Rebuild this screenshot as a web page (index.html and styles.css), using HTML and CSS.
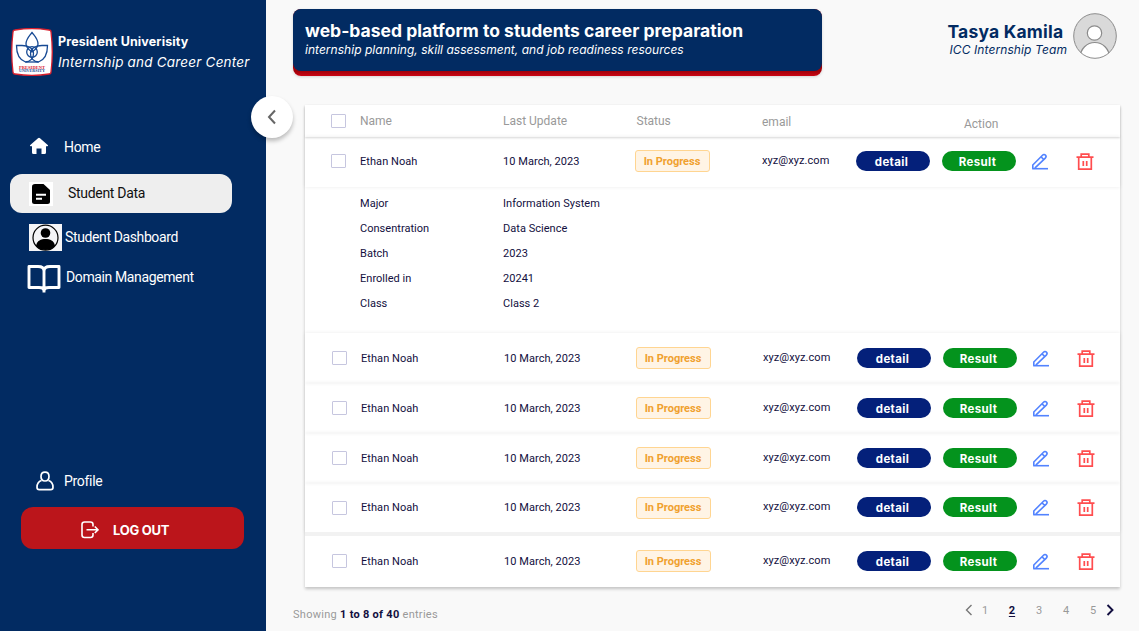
FILE: index.html
```
<!DOCTYPE html>
<html lang="en">
<head>
<meta charset="utf-8">
<title>Student Data</title>
<link rel="stylesheet" href="styles.css">
</head>
<body>
<svg class="defs" width="0" height="0">
  <symbol id="pencil" viewBox="0 0 18 18"><g fill="none" stroke="#5283ff" stroke-width="1.6"><path d="M1.8 15.8V12L11.5 2.3C12.4 1.4 13.6 1.3 14.4 2.1C15.2 2.900 15.2 4.2 14.3 5.1L3.8 15.2M10 3.8L12.8 6.6"/><path d="M1.2 15.7H17"/></g></symbol>
  <symbol id="trash" viewBox="0 0 18 18"><g fill="none" stroke="#ff4d4f" stroke-width="1.7"><path d="M.5 4.2H17.5M5.2 4V1.2H12.8V4M2.7 4.2V16.2H15.3V4.2M7.3 8V13M10.7 8V13"/></g></symbol>
</svg>
<div class="app">
  <aside class="sidebar">
    <div class="brand">
      <svg class="logo" width="42" height="48" viewBox="0 0 42 48">
        <path d="M4 2Q21 -1 38 2Q40 2 40 4Q42.500 24 40 44Q40 46 38 46Q21 49 4 46Q2 46 2 44Q-.5 24 2 4Q2 2 4 2Z" fill="#fff" stroke="#d9202e" stroke-width="1.300"/>
        <g fill="none" stroke="#174a94" stroke-width="1.300">
          <path d="M15 16C15 11 18 8.500 21 4.500C24 8.500 27 11 27 16C27 20 24 22 21 24C18 22 15 20 15 16Z"/>
          <path d="M5.500 17.500H11C17 17.500 22 20 22.500 25C23 30 19 34 14.500 34C9 32 5.500 26 5.500 17.500Z"/>
          <path d="M36.500 17.500H31C25 17.500 20 20 19.500 25C19 30 23 34 27.500 34C33 32 36.500 26 36.500 17.500Z"/>
          <circle cx="21" cy="24" r="5.300"/>
          <path d="M14.500 34H27.500"/>
        </g>
        <text x="21" y="40.500" class="logo-red" textLength="26" lengthAdjust="spacingAndGlyphs">PRESIDENT</text>
        <text x="21" y="44.300" class="logo-blue" textLength="26" lengthAdjust="spacingAndGlyphs">UNIVERSITY</text>
      </svg>
      <div class="brand-text">
        <div class="brand-name">President Univerisity</div>
        <div class="brand-sub">Internship and Career Center</div>
      </div>
    </div>
    <nav class="nav">
      <a class="nav-item home"><svg width="20" height="18" viewBox="0 0 20 18"><path d="M10 .8Q10.500 .8 11 1.200L19 8.300Q19.300 9 18.500 9.200H17V15.500Q17 17 15.500 17H12.500V11.500H7.500V17H4.500Q3 17 3 15.500V9.200H1.500Q.7 9 1 8.300L9 1.200Q9.500 .8 10 .8Z" fill="#fff"/></svg><span>Home</span></a>
      <a class="nav-item active"><svg width="24" height="24" viewBox="0 0 24 24"><path d="M0 0H24V24H0Z" fill="#fff"/><path d="M6 2H14.500L21 8V19.500Q21 22 18.500 22H5.500Q3 22 3 19.500V4.500Q3 2 6 2Z"/><path d="M7 12.700H17M7 16.700H13" stroke="#fff" stroke-width="2"/></svg><span>Student Data</span></a>
      <a class="nav-item dashboard"><svg width="33" height="27" viewBox="0 0 33 27"><path d="M0 0H33V27H0Z" fill="#f5f5f7"/><circle cx="16.500" cy="13.700" r="12.500" fill="none" stroke="#000" stroke-width="1.200"/><circle cx="16.500" cy="9" r="4.800"/><path d="M7 22C8 16.500 12 15 16.500 15S25 16.500 26 22Q22 26 16.500 26T7 22Z"/></svg><span>Student Dashboard</span></a>
      <a class="nav-item domain"><svg width="34" height="30" viewBox="0 0 34 30"><path d="M2 2.500H11Q17 2.500 17 7Q17 2.500 23 2.500H32V23.500H22Q17 23.500 17 27Q17 23.500 12 23.500H2ZM17 6V28.500" fill="none" stroke="#fff" stroke-width="2.900" stroke-linejoin="round"/></svg><span>Domain Management</span></a>
    </nav>
    <div class="account">
      <a class="profile"><svg width="18" height="20" viewBox="0 0 18 20"><g fill="none" stroke="#fff" stroke-width="1.700"><path d="M9 1.200C11.500 1.200 13 3 13 5.500C13 8 11.500 10 9 10S5 8 5 5.500C5 3 6.500 1.200 9 1.200Z"/><path d="M5.500 9.500C2.500 10.500 1 13 1 16.200Q1 18.600 3.300 18.600H14.700Q17 18.600 17 16.200C17 13 15.500 10.500 12.500 9.500"/></g></svg><span>Profile</span></a>
      <a class="logout"><svg width="18" height="18" viewBox="0 0 18 18"><path d="M12 5.500V3.500Q12 1 9.500 1H3.500Q1 1 1 3.500V14Q1 16.500 3.500 16.500H9.500Q12 16.500 12 14V12M5.500 8.800H17M13.800 5.500L17 8.800L13.800 12" fill="none" stroke="#fff" stroke-width="1.600"/></svg><span>LOG OUT</span></a>
    </div>
    <button class="collapse"><svg width="10" height="16" viewBox="0 0 10 16"><path d="M8 1.500L2 8L8 14.500" fill="none" stroke="#666" stroke-width="2"/></svg></button>
  </aside>
  <main class="main">
    <header class="top">
      <div class="banner"><div class="banner-in">
        <div class="banner-title">web-based platform to students career preparation</div>
        <div class="banner-sub">internship planning, skill assessment, and job readiness resources</div>
      </div></div>
      <div class="user">
        <div class="user-text"><div class="user-name">Tasya Kamila</div><div class="user-role">ICC Internship Team</div></div>
        <svg width="44" height="46" viewBox="0 0 44 46"><clipPath id="av"><ellipse cx="22" cy="23" rx="21.500" ry="22.500"/></clipPath><ellipse cx="22" cy="23" rx="21.300" ry="22.300" fill="#d9d9d9"/><g clip-path="url(#av)" fill="#fff" stroke="#8c8c8c" stroke-width="1.200"><circle cx="21.500" cy="20" r="7.200"/><ellipse cx="21.800" cy="44" rx="14.500" ry="14.500"/></g><ellipse cx="22" cy="23" rx="21.300" ry="22.300" fill="none" stroke="#8c8c8c"/></svg>
      </div>
    </header>
    <section class="table">
      <div class="grid head"><i class="check"></i><span>Name</span><span>Last Update</span><span class="h-status">Status</span><span class="h-email">email</span><span class="h-action">Action</span></div>
      <div class="grid row first"><i class="check"></i><span>Ethan Noah</span><span>10 March, 2023</span><b class="badge">In Progress</b><span class="email">xyz@xyz.com</span><b class="pill">detail</b><b class="pill green">Result</b><svg><use href="#pencil"/></svg><svg><use href="#trash"/></svg></div>
      <dl class="details">
        <dt>Major</dt><dd>Information System</dd>
        <dt>Consentration</dt><dd>Data Science</dd>
        <dt>Batch</dt><dd>2023</dd>
        <dt>Enrolled in</dt><dd>20241</dd>
        <dt>Class</dt><dd>Class 2</dd>
      </dl>
      <div class="grid row"><i class="check"></i><span>Ethan Noah</span><span>10 March, 2023</span><b class="badge">In Progress</b><span class="email">xyz@xyz.com</span><b class="pill">detail</b><b class="pill green">Result</b><svg><use href="#pencil"/></svg><svg><use href="#trash"/></svg></div>
      <div class="grid row"><i class="check"></i><span>Ethan Noah</span><span>10 March, 2023</span><b class="badge">In Progress</b><span class="email">xyz@xyz.com</span><b class="pill">detail</b><b class="pill green">Result</b><svg><use href="#pencil"/></svg><svg><use href="#trash"/></svg></div>
      <div class="grid row"><i class="check"></i><span>Ethan Noah</span><span>10 March, 2023</span><b class="badge">In Progress</b><span class="email">xyz@xyz.com</span><b class="pill">detail</b><b class="pill green">Result</b><svg><use href="#pencil"/></svg><svg><use href="#trash"/></svg></div>
      <div class="grid row short"><i class="check"></i><span>Ethan Noah</span><span>10 March, 2023</span><b class="badge">In Progress</b><span class="email">xyz@xyz.com</span><b class="pill">detail</b><b class="pill green">Result</b><svg><use href="#pencil"/></svg><svg><use href="#trash"/></svg></div>
      <div class="grid row last"><i class="check"></i><span>Ethan Noah</span><span>10 March, 2023</span><b class="badge">In Progress</b><span class="email">xyz@xyz.com</span><b class="pill">detail</b><b class="pill green">Result</b><svg><use href="#pencil"/></svg><svg><use href="#trash"/></svg></div>
    </section>
    <footer class="foot">
      <div class="showing">Showing <b>1 to 8 of 40</b> entries</div>
      <div class="pages">
        <svg width="8" height="12" viewBox="0 0 8 12"><path d="M6.500 1L1.500 6L6.500 11" fill="none" stroke="#777" stroke-width="1.400"/></svg>
        <span>1</span><span class="current">2</span><span>3</span><span>4</span><span>5</span>
        <svg width="8" height="12" viewBox="0 0 8 12"><path d="M1.500 1L6.500 6L1.500 11" fill="none" stroke="#120f40" stroke-width="1.900"/></svg>
      </div>
    </footer>
  </main>
</div>
</body>
</html>
```
FILE: styles.css
```
* { box-sizing: border-box; }
body { margin: 0; background: #f9f9f9; font-family: Roboto, "Liberation Sans", sans-serif; }
.defs { position: absolute; }
svg { display: block; flex: none; }
.app { display: flex; width: 1139px; height: 631px; overflow: hidden; }

.sidebar { position: relative; width: 266px; flex: none; background: #022b62; color: #fff; display: flex; flex-direction: column; }
.brand { display: flex; padding: 28px 0 0 11px; gap: 5px; height: 136px; white-space: nowrap; font-family: Inter, sans-serif; }
.logo-red, .logo-blue { font: 700 4.200px "Liberation Serif", serif; text-anchor: middle; fill: #d9202e; }
.logo-blue { fill: #174a94; }
.brand-text { padding-top: 4px; }
.brand-name { font-size: 12.500px; line-height: 20px; font-weight: 700; letter-spacing: .13px; }
.brand-sub { font-size: 13.500px; line-height: 20px; font-style: italic; letter-spacing: .2px; }
.nav { display: flex; flex-direction: column; font-size: 14px; letter-spacing: -.38px; }
.nav-item { display: flex; align-items: center; white-space: nowrap; }
.home { height: 19px; padding-left: 29px; gap: 15px; letter-spacing: -.3px; }
.home span { padding-top: 2px; }
.active { margin: 19px 0 0 10px; width: 222px; height: 39px; border-radius: 12px; background: #eee; color: #111; padding-left: 19px; gap: 15px; letter-spacing: -.3px; }
.active span, .dashboard span { margin-top: -1px; }
.dashboard { margin-top: 11px; height: 27px; padding-left: 29px; gap: 3px; }
.domain { margin-top: 13px; height: 30px; padding-left: 27px; gap: 5px; }
.domain span { margin-top: -4px; }
.account { margin: auto 0 82px; }
.profile { display: flex; align-items: center; height: 20px; padding-left: 36px; gap: 10px; font-size: 14px; letter-spacing: -.3px; margin-bottom: 16px; }
.logout { display: flex; align-items: center; margin-left: 21px; width: 223px; height: 42px; border-radius: 12px; background: #bb151b; padding: 3px 0 0 60px; gap: 14px; font: 700 13px Inter, sans-serif; letter-spacing: -.25px; }
.collapse { position: absolute; left: 251px; top: 96px; width: 42px; height: 42px; border: 0; border-radius: 50%; background: #fff; box-shadow: 0 3px 4px rgba(0,0,0,.25); display: grid; place-items: center; padding: 0; }

.main { flex: 1; display: flex; flex-direction: column; }
.top { display: flex; justify-content: space-between; padding: 9px 22px 0 27px; height: 105px; font-family: Inter, sans-serif; white-space: nowrap; color: #022b62; }
.banner { width: 529px; height: 67px; padding-bottom: 5px; border-radius: 8px; background: linear-gradient(#a00008 62px, #c90514); box-shadow: 0 1px 3px rgba(0,0,0,.15); }
.banner-in { height: 62px; border-radius: 8px; background: #022b62; color: #fff; padding: 12px 12px 0; }
.banner-title { font-size: 17.500px; line-height: 20px; font-weight: 700; letter-spacing: .02px; }
.banner-sub { font-size: 12px; line-height: 17px; font-style: italic; letter-spacing: .03px; }
.user { display: flex; padding-top: 4px; gap: 6px; }
.user-text { padding-top: 9px; }
.user-name { font-size: 17.500px; line-height: 20px; font-weight: 700; letter-spacing: .2px; margin-left: -1px; }
.user-role { font-size: 12px; line-height: 15px; font-style: italic; padding-left: 1px; letter-spacing: .1px; }

.table { margin-left: 39px; width: 815px; height: 482px; background: #fff; box-shadow: 0 2px 3px rgba(0,0,0,.22); }
.grid { display: grid; grid-template-columns: 29px 143px 131.500px 127.500px 94px 86px 90px 45px 20px; align-items: center; padding-left: 27px; height: 50px; white-space: nowrap; }
.row { font-size: 11px; letter-spacing: .06px; color: #120f40; box-shadow: 0 0 4px rgba(0,0,0,.08); }
.head { height: 32px; padding-left: 26px; font-size: 12px; letter-spacing: 0; color: #999; box-shadow: 0 1px 2px rgba(0,0,0,.16); }
.first { padding: 0 0 2px 26px; height: 50px; }
.short { height: 49px; }
.last { height: 54px; border-top: 4px solid #f2f2f2; box-shadow: none; }
.check { width: 15px; height: 14px; border: 1px solid #c6c6df; border-radius: 1px; }
.h-status { padding-left: 2px; }
.h-email { padding-top: 2px; }
.h-action { grid-column: 6 / span 3; padding: 6px 0 0 108px; }
.badge { width: 75px; height: 22px; border: 1px solid #ffd591; border-radius: 3px; background: #fff4e5; color: #f0a12f; font-weight: 700; display: grid; place-items: center; letter-spacing: 0; }
.email { padding-bottom: 2px; }
.pill { width: 74px; height: 20px; border-radius: 10px; background: #04207a; color: #fff; display: grid; place-items: center; margin-top: -1px; padding: 2px 3px 0 0; font: 700 11.500px Inter, sans-serif; letter-spacing: .35px; }
.green { background: #04931d; }
.row svg { width: 18px; height: 18px; margin-left: -1px; margin-top: 1px; }
.details { margin: 0; height: 146px; display: grid; grid-template-columns: 143px 1fr; grid-auto-rows: 25px; align-items: center; padding: 4px 0 0 55px; font-size: 11px; letter-spacing: .03px; color: #120f40; }
.details dd { margin: 0; }
.foot { display: flex; justify-content: space-between; padding: 14px 25px 0 27px; font-size: 11px; color: #999; }
.showing { padding-top: 7px; letter-spacing: .28px; }
.showing b { color: #120f40; }
.pages { display: flex; height: 18px; align-items: center; }
.pages span { width: 7px; text-align: center; margin-right: 20px; }
.pages span:nth-of-type(1) { margin-left: 9px; }
.pages span:nth-of-type(5) { margin-right: 9.500px; }
.pages .current { color: #120f40; font-weight: 700; text-decoration: underline; text-underline-offset: 2px; }
```
